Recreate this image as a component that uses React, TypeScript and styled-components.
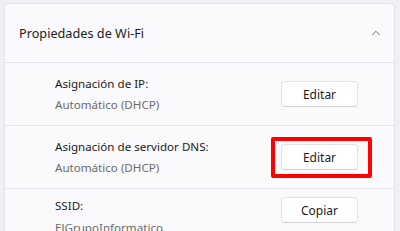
import React from 'react'
import styled, { createGlobalStyle } from 'styled-components'
import { ChevronUp } from 'lucide-react'

const GlobalStyle = createGlobalStyle`
  html, body {
    margin: 0;
    padding: 0;
    background: #eef0f5;
    font-family: 'Noto Sans', 'Open Sans', sans-serif;
    overflow: hidden;
  }
`

const Page = styled.div`
  width: 400px;
  height: 231px;
  padding: 3px 5px 0 4px;
  box-sizing: border-box;
  overflow: hidden;
`

const Card = styled.section`
  background: #fafafc;
  border: 1px solid #e3e4e9;
  border-bottom: none;
  border-radius: 5px 5px 0 0;
`

const Header = styled.div`
  display: flex;
  align-items: center;
  justify-content: space-between;
  height: 58px;
  padding: 0 11px 0 14px;
  border-bottom: 1px solid #e3e4e9;
  color: #1b1b1b;
  font-size: 12.7px;
`

const Row = styled.div<{ $top?: boolean; $last?: boolean }>`
  display: flex;
  align-items: ${({ $top }) => ($top ? 'flex-start' : 'center')};
  justify-content: space-between;
  height: 63px;
  box-sizing: border-box;
  padding: ${({ $top }) => ($top ? '8px 36px 0 50px' : '0 36px 0 50px')};
  border-bottom: ${({ $last }) => ($last ? 'none' : '1px solid #e3e4e9')};
`

const Texts = styled.div<{ $gap: number }>`
  display: flex;
  flex-direction: column;
  gap: ${({ $gap }) => $gap}px;
  font-size: 11.6px;
  line-height: 18px;
`

const Title = styled.span`
  color: #1b1b1b;
`

const Value = styled.span`
  color: #6a6a6a;
`

const ButtonWrap = styled.div`
  position: relative;
`

const Button = styled.button`
  display: block;
  width: 77px;
  height: 26px;
  background: #ffffff;
  border: 1px solid #e2e2e4;
  border-bottom-color: #d2d2d5;
  border-radius: 4px;
  font-family: 'Noto Sans', 'Open Sans', sans-serif;
  font-size: 12px;
  color: #1b1b1b;
  padding: 0;
`

const Highlight = styled.div`
  position: absolute;
  left: -10px;
  right: -14px;
  top: -7px;
  bottom: -8px;
  border: 4px solid #ff0000;
  border-radius: 2px;
  pointer-events: none;
`

type Item = { title: string; value: string; action: string; marked?: boolean; top?: boolean }

const items: Item[] = [
  { title: 'Asignación de IP:', value: 'Automático (DHCP)', action: 'Editar' },
  { title: 'Asignación de servidor DNS:', value: 'Automático (DHCP)', action: 'Editar', marked: true },
  { title: 'SSID:', value: 'ElGrupoInformatico', action: 'Copiar', top: true },
]

export default function App() {
  return (
    <Page>
      <GlobalStyle />
      <Card>
        <Header>
          <span>Propiedades de Wi-Fi</span>
          <ChevronUp size={14} strokeWidth={1.2} color="#333" />
        </Header>
        {items.map((it, i) => (
          <Row key={it.title} $top={it.top} $last={i === items.length - 1}>
            <Texts $gap={it.top ? 4 : 3}>
              <Title>{it.title}</Title>
              <Value>{it.value}</Value>
            </Texts>
            <ButtonWrap>
              <Button>{it.action}</Button>
              {it.marked && <Highlight />}
            </ButtonWrap>
          </Row>
        ))}
      </Card>
    </Page>
  )
}
